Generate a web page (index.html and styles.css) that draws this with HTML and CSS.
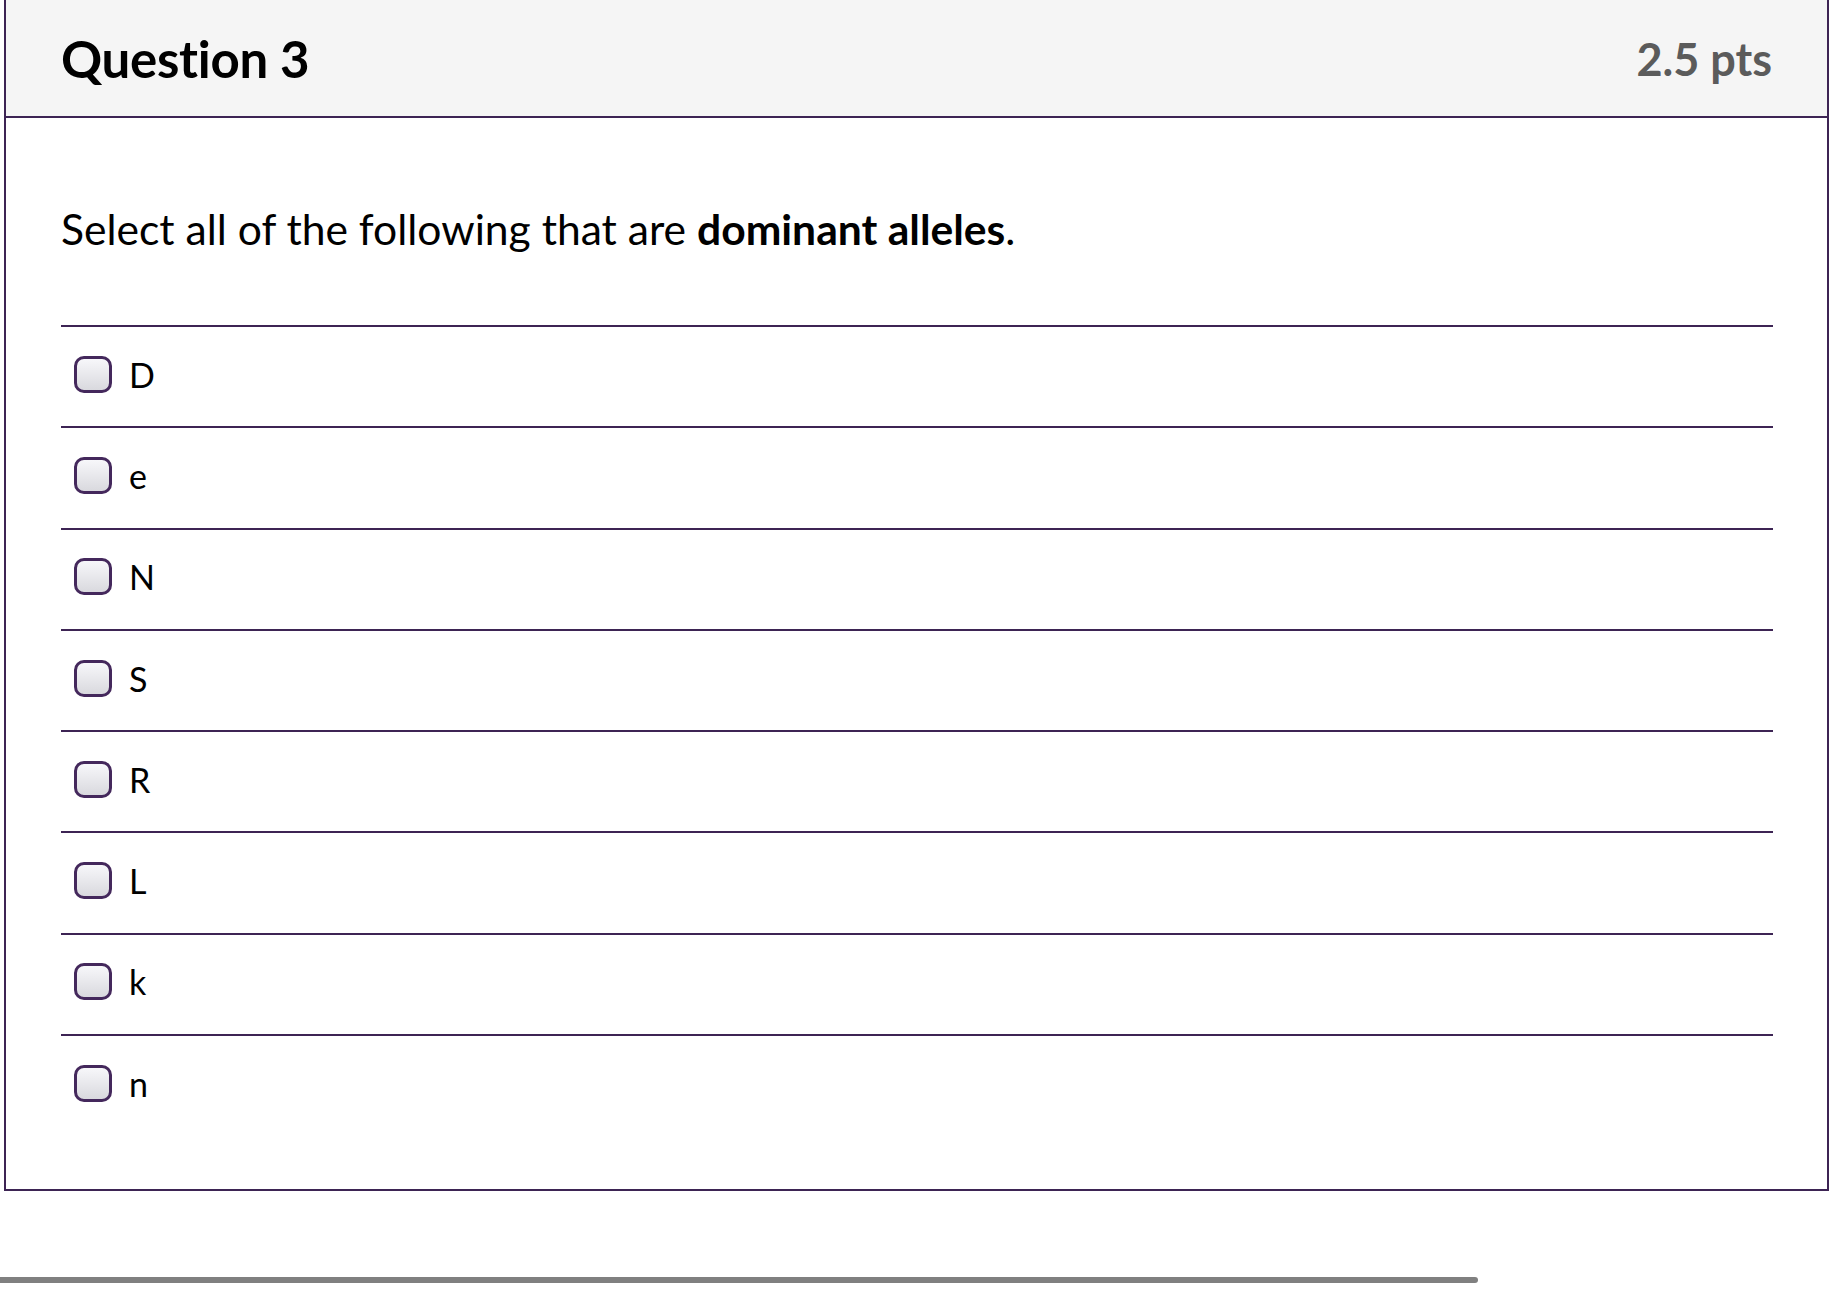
FILE: index.html
```html
<!DOCTYPE html>
<html>
<head>
<meta charset="utf-8">
<link rel="stylesheet" href="styles.css">
</head>
<body>
<div class="question">
  <div class="q-header">
    <h2 class="q-title">Question 3</h2>
    <div class="q-points">2.5 pts</div>
  </div>
  <div class="q-body">
    <p class="q-text">Select all of the following that are <strong>dominant alleles</strong>.</p>
    <div class="answers">
      <label class="answer"><span class="box"></span><span class="label">D</span></label>
      <label class="answer"><span class="box"></span><span class="label">e</span></label>
      <label class="answer"><span class="box"></span><span class="label">N</span></label>
      <label class="answer"><span class="box"></span><span class="label">S</span></label>
      <label class="answer"><span class="box"></span><span class="label">R</span></label>
      <label class="answer"><span class="box"></span><span class="label">L</span></label>
      <label class="answer"><span class="box"></span><span class="label">k</span></label>
      <label class="answer last"><span class="box"></span><span class="label">n</span></label>
    </div>
  </div>
</div>
<div class="hscroll"></div>
</body>
</html>
```

FILE: styles.css
```css
html, body {
  margin: 0;
  padding: 0;
  background: #ffffff;
}
body {
  font-family: Lato, "Open Sans", "Liberation Sans", sans-serif;
  color: #000;
  height: 1289px;
  overflow: hidden;
}
.question {
  margin-left: 4px;
  border: 2px solid #3d2454;
  border-top: none;
  box-sizing: border-box;
  width: 1825px;
}
.q-header {
  height: 116px;
  background: #f5f5f5;
  border-bottom: 2px solid #3d2454;
  display: flex;
  align-items: center;
  justify-content: space-between;
  padding: 0 55px 0 55px;
  box-sizing: content-box;
}
.q-title {
  margin: 0;
  font-size: 51px;
  font-weight: 700;
  letter-spacing: -0.3px;
  color: #000;
}
.q-points {
  font-size: 45px;
  font-weight: 700;
  color: #5b5b5b;
  margin-top: 2px;
}
.q-body {
  padding: 86px 54px 54px 55px;
}
.q-text {
  margin: 0;
  font-size: 42.6px;
  line-height: 50px;
  height: 121px;
}
.q-text strong {
  font-weight: 700;
}
.answers {
  display: flex;
  flex-direction: column;
}
.answer {
  display: flex;
  align-items: center;
  height: 101.3px;
  border-top: 2px solid #3d2454;
  box-sizing: border-box;
  padding-left: 13px;
  padding-bottom: 5px;
}
.box {
  width: 38px;
  height: 37px;
  box-sizing: border-box;
  border: 3px solid #44285c;
  border-radius: 10px;
  background: linear-gradient(#f7f7fa, #d9d9de);
  margin-right: 17px;
  flex: none;
}
.label {
  font-size: 34px;
  color: #000;
}
.hscroll {
  margin-top: 86px;
  width: 1478px;
  height: 6px;
  background: #808080;
  border-radius: 0 3px 3px 0;
}
```
